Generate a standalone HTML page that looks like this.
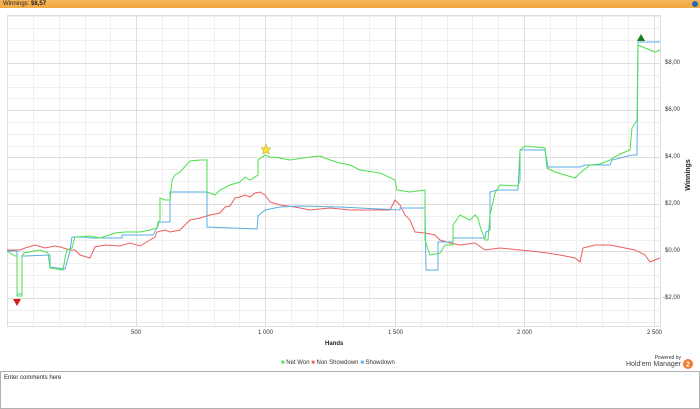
<!DOCTYPE html>
<html><head><meta charset="utf-8"><style>
body{margin:0;width:700px;height:408px;overflow:hidden;background:#fff;font-family:"Liberation Sans",sans-serif;position:relative}
.top{position:absolute;left:0;top:0;width:700px;height:8px;background:linear-gradient(#f7b657,#f0a83f);font-size:6px;line-height:8px;color:#222}
.t{position:absolute;font-size:6px;color:#333}
</style></head><body>
<div class="top"><span style="padding-left:3px">Winnings: <b>$8,57</b></span>
<div style="position:absolute;right:2px;top:1px;width:6px;height:6px;border-radius:50%;background:#2b66b0"></div></div>
<svg width="700" height="408" style="position:absolute;left:0;top:0">
<g stroke="#efefef" stroke-width="1">
<line x1="7.5" y1="15" x2="7.5" y2="326"/><line x1="33.5" y1="15" x2="33.5" y2="326"/><line x1="59.5" y1="15" x2="59.5" y2="326"/><line x1="85.5" y1="15" x2="85.5" y2="326"/><line x1="110.5" y1="15" x2="110.5" y2="326"/><line x1="162.5" y1="15" x2="162.5" y2="326"/><line x1="188.5" y1="15" x2="188.5" y2="326"/><line x1="214.5" y1="15" x2="214.5" y2="326"/><line x1="239.5" y1="15" x2="239.5" y2="326"/><line x1="291.5" y1="15" x2="291.5" y2="326"/><line x1="317.5" y1="15" x2="317.5" y2="326"/><line x1="343.5" y1="15" x2="343.5" y2="326"/><line x1="369.5" y1="15" x2="369.5" y2="326"/><line x1="421.5" y1="15" x2="421.5" y2="326"/><line x1="447.5" y1="15" x2="447.5" y2="326"/><line x1="472.5" y1="15" x2="472.5" y2="326"/><line x1="498.5" y1="15" x2="498.5" y2="326"/><line x1="550.5" y1="15" x2="550.5" y2="326"/><line x1="576.5" y1="15" x2="576.5" y2="326"/><line x1="602.5" y1="15" x2="602.5" y2="326"/><line x1="628.5" y1="15" x2="628.5" y2="326"/>
<line x1="7" y1="16.5" x2="661" y2="16.5"/><line x1="7" y1="28.5" x2="661" y2="28.5"/><line x1="7" y1="40.5" x2="661" y2="40.5"/><line x1="7" y1="51.5" x2="661" y2="51.5"/><line x1="7" y1="75.5" x2="661" y2="75.5"/><line x1="7" y1="87.5" x2="661" y2="87.5"/><line x1="7" y1="98.5" x2="661" y2="98.5"/><line x1="7" y1="122.5" x2="661" y2="122.5"/><line x1="7" y1="134.5" x2="661" y2="134.5"/><line x1="7" y1="146.5" x2="661" y2="146.5"/><line x1="7" y1="169.5" x2="661" y2="169.5"/><line x1="7" y1="181.5" x2="661" y2="181.5"/><line x1="7" y1="193.5" x2="661" y2="193.5"/><line x1="7" y1="216.5" x2="661" y2="216.5"/><line x1="7" y1="228.5" x2="661" y2="228.5"/><line x1="7" y1="240.5" x2="661" y2="240.5"/><line x1="7" y1="263.5" x2="661" y2="263.5"/><line x1="7" y1="275.5" x2="661" y2="275.5"/><line x1="7" y1="287.5" x2="661" y2="287.5"/><line x1="7" y1="310.5" x2="661" y2="310.5"/><line x1="7" y1="322.5" x2="661" y2="322.5"/>
</g>
<g stroke="#dedede" stroke-width="1">
<line x1="136.5" y1="15" x2="136.5" y2="326"/><line x1="265.5" y1="15" x2="265.5" y2="326"/><line x1="395.5" y1="15" x2="395.5" y2="326"/><line x1="524.5" y1="15" x2="524.5" y2="326"/><line x1="654.5" y1="15" x2="654.5" y2="326"/>
<line x1="7" y1="63.5" x2="661" y2="63.5"/><line x1="7" y1="110.5" x2="661" y2="110.5"/><line x1="7" y1="157.5" x2="661" y2="157.5"/><line x1="7" y1="204.5" x2="661" y2="204.5"/><line x1="7" y1="251.5" x2="661" y2="251.5"/><line x1="7" y1="298.5" x2="661" y2="298.5"/>
<rect x="7.5" y="15.5" width="653" height="311" fill="none"/>
</g>
<g fill="none" stroke-width="1">
<polyline stroke="#ee5f5f" points="7,250 20,250 25,248 35,245 45,248 55,246 60,247 70,250 75,250 80,255 90,258 95,247 105,245 120,246 130,243 140,246 150,240 155,237 157,232 165,230 170,232 180,230 185,225 190,220 200,218 210,215 220,213 225,207 230,206 235,198 240,197 245,195 250,197 255,193 260,192 265,195 270,202 280,205 295,207 310,210 330,208 350,210 380,210 390,210 395,200 400,205 405,215 410,220 415,232 425,233 435,235 440,240 450,243 460,245 475,243 485,250 500,248 520,250 540,252 560,255 575,258 580,262 583,248 595,245 610,245 625,248 635,250 645,255 650,262 660,258"/>
<polyline stroke="#5aaee6" points="7,251 17,251 17,294 22,294 22,256 25,256 50,255 50,267 65,269 70,251 72,237 85,237 90,238 122,238 122,235 153,235 157,228 158,222 170,222 170,192 207,192 207,227 257,229 258,216 265,210 280,207 300,206 340,207 400,210 400,208 425,208 426,270 438,270 438,242 453,242 453,238 485,238 486,232 490,230 490,192 497,190 518,190 520,150 545,150 548,167 580,167 585,165 610,165 612,160 632,155 637,155 638,42 660,42"/>
<polyline stroke="#4de04d" points="7,251 10,253 15,256 17,256 17,296 22,296 22,256 24,253 40,250 48,253 50,268 63,270 65,258 67,250 72,248 75,237 90,236 100,238 115,233 125,232 140,232 150,230 157,228 160,220 160,198 165,200 170,200 172,180 175,175 180,172 190,161 200,160 207,160 207,192 215,195 220,190 230,185 240,182 245,177 250,180 258,175 258,160 265,155 270,157 280,158 290,160 310,157 320,156 330,160 340,163 350,165 360,170 380,173 395,180 397,190 410,192 425,190 425,240 430,255 440,253 445,245 453,245 453,225 460,215 470,220 475,215 478,218 480,226 485,240 488,240 490,215 495,193 500,185 518,186 520,180 520,150 525,146 545,148 547,168 555,172 565,175 575,178 580,173 590,165 600,164 610,160 618,155 625,152 630,150 632,128 637,120 638,45 645,48 650,50 655,52 660,50"/>
</g>
<polygon points="13,299 21,299 17,306" fill="#d0201a"/>
<polygon points="637,41 645,41 641,34" fill="#1a7a1a"/>
<polygon points="266,144 267.5,148 271,148 268.3,150.5 269.3,154 266,152 262.7,154 263.7,150.5 261,148 264.5,148" fill="#f5e23a" stroke="#b8a010" stroke-width="0.5"/>
<text x="690" y="175" font-size="7" font-weight="bold" transform="rotate(-90 690 175)" text-anchor="middle" font-family="Liberation Sans" fill="#222">Winnings</text>
<circle cx="688" cy="364" r="5" fill="#f07a30"/>
<text x="688" y="366.5" font-size="7" font-weight="bold" fill="#fff" text-anchor="middle" font-family="Liberation Sans">2</text>
</svg>
<div class="t" style="left:665px;top:60px">$8,00</div>
<div class="t" style="left:665px;top:107px">$6,00</div>
<div class="t" style="left:665px;top:154px">$4,00</div>
<div class="t" style="left:665px;top:201px">$2,00</div>
<div class="t" style="left:665px;top:248px">$0,00</div>
<div class="t" style="left:663px;top:295px">-$2,00</div>
<div class="t" style="left:131px;top:330px">500</div>
<div class="t" style="left:258px;top:330px">1 000</div>
<div class="t" style="left:388px;top:330px">1 500</div>
<div class="t" style="left:517px;top:330px">2 000</div>
<div class="t" style="left:647px;top:330px">2 500</div>
<div class="t" style="left:325px;top:341px;font-weight:bold;color:#222">Hands</div>
<div class="t" style="left:281px;top:360px"><span style="color:#4de04d">■</span> Net Won <span style="color:#ee5f5f">■</span> Non Showdown <span style="color:#5aaee6">■</span> Showdown</div>
<div class="t" style="right:19px;top:355px;font-size:5px">Powered by</div>
<div class="t" style="right:19px;top:361px;font-size:7px;color:#444;white-space:nowrap">Hold'em Manager</div>
<div style="position:absolute;left:0;top:371px;width:698px;height:36px;border:1px solid #b0b0b0;font-size:6px;color:#222"><div style="padding:3px 3px">Enter comments here</div></div>
</body></html>
